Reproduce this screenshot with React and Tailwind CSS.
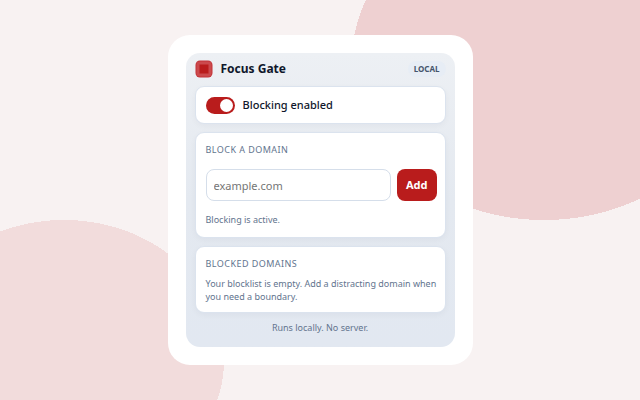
import { useState } from 'react'

function Card({ children, className = '' }) {
  return (
    <section className={`rounded-[9px] border border-[#dbe3ee] bg-white pr-2 pl-[10px] shadow-[0_2px_6px_rgba(15,23,42,0.04)] ${className}`}>
      {children}
    </section>
  )
}

export default function App() {
  const [enabled, setEnabled] = useState(true)
  const [domain, setDomain] = useState('')

  return (
    <div className="min-h-screen flex items-center justify-center bg-[#f8f2f2] bg-[radial-gradient(ellipse_30%_40%_at_85%_15%,#eed0d1_100%,transparent_100%),radial-gradient(ellipse_25%_35%_at_10%_90%,#f2dcdc_100%,transparent_100%)] font-['Noto_Sans',sans-serif]">
      <div className="w-full max-w-[305px] rounded-[22px] bg-white p-[18px]">
        <main className="flex flex-col gap-2 rounded-[14px] bg-linear-to-b from-[#edf0f4] via-[#e4e9f0] to-[#e2e8f1] px-[9px] pt-[7px] pb-3">
          <header className="flex items-center gap-2">
            <svg className="size-[18px]" viewBox="0 0 18 18" aria-hidden="true">
              <rect x="0.5" y="0.5" width="17" height="17" rx="4.5" fill="#c23338" />
              <rect x="1.5" y="1.5" width="15" height="15" rx="3" fill="#cb4a4d" />
              <rect x="4.5" y="4.5" width="9" height="9" fill="#b91c1c" />
            </svg>
            <h1 className="text-xs leading-[18px] font-bold text-slate-900">Focus Gate</h1>
            <span className="ml-auto rounded-full bg-[#e7edf5] px-1.5 text-[8px] leading-4 font-bold text-slate-600">LOCAL</span>
          </header>

          <Card className="py-[9px]">
            <label className="flex items-center gap-2 text-[11px] leading-[18px] font-medium text-slate-900">
              <input
                type="checkbox"
                role="switch"
                checked={enabled}
                onChange={e => setEnabled(e.target.checked)}
                className="h-[17px] w-[29px] appearance-none rounded-full bg-slate-300 p-0.5 before:block before:size-[13px] before:rounded-full before:bg-white checked:bg-[#b91c1c] checked:before:ml-3"
              />
              Blocking enabled
            </label>
          </Card>

          <Card className="py-[10px]">
            <h2 className="text-[9px] leading-[14px] tracking-wider text-slate-500">
              <label htmlFor="domain">BLOCK A DOMAIN</label>
            </h2>
            <form className="mt-3 flex gap-1.5" onSubmit={e => e.preventDefault()}>
              <input
                id="domain"
                value={domain}
                onChange={e => setDomain(e.target.value)}
                placeholder="example.com"
                className="h-8 min-w-0 flex-1 rounded-lg border border-[#d5deea] bg-white px-[7px] text-[11px] text-slate-900 outline-none placeholder:text-[#757575]"
              />
              <button type="submit" className="h-8 rounded-lg bg-[#b91c1c] px-[9px] text-[11px] font-bold text-white">
                Add
              </button>
            </form>
            <p className="mt-3 text-[9px] leading-[14px] text-slate-500">
              {enabled ? 'Blocking is active.' : 'Blocking is paused.'}
            </p>
          </Card>

          <Card className="pt-[10px] pb-[9px]">
            <h2 className="text-[9px] leading-[14px] tracking-wider text-slate-500">BLOCKED DOMAINS</h2>
            <p className="mt-1.5 text-[9px] leading-[13px] text-slate-500">
              Your blocklist is empty. Add a distracting domain when you need a boundary.
            </p>
          </Card>

          <footer className="text-center text-[9px] leading-[14px] text-slate-500">Runs locally. No server.</footer>
        </main>
      </div>
    </div>
  )
}
